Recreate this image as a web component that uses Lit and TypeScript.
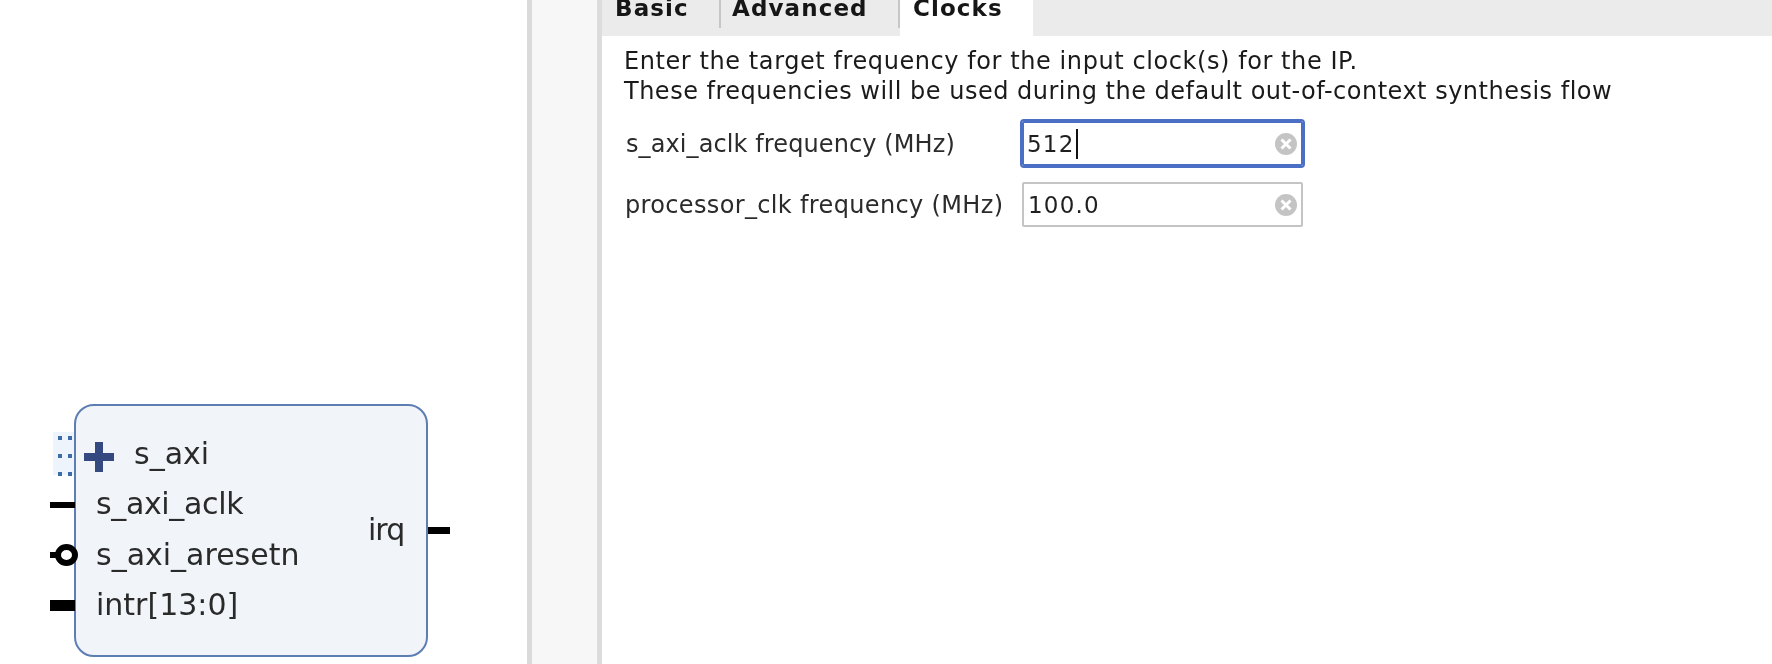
import { LitElement, html, css } from "lit";
import { customElement } from "lit/decorators.js";

const clearIcon = html`<svg class="clear" viewBox="0 0 24 24" width="24" height="24">
  <circle cx="12" cy="12" r="11" fill="#c4c4c4"></circle>
  <path d="M7.5 7.5 L16.5 16.5 M16.5 7.5 L7.5 16.5" stroke="#fff" stroke-width="3" fill="none"></path>
</svg>`;

@customElement("app-root")
export class AppRoot extends LitElement {
  static styles = css`
    :host {
      display: block;
      width: 1772px;
      height: 664px;
      overflow: hidden;
      background: #fff;
      font-family: "DejaVu Sans", sans-serif;
      color: #1c1c1c;
    }
    .page { display: flex; height: 664px; }
    .canvas { position: relative; width: 527px; flex: none; background: #fff; }
    .soft { filter: blur(0.45px); }
    .block {
      position: absolute; left: 74px; top: 404px; width: 350px; height: 249px;
      border: 2px solid #5d7eb3; border-radius: 20px; background: #f1f5fa;
    }
    .label { position: absolute; font-size: 30px; line-height: 32px; white-space: nowrap; color: #2a2a2a; }
    .label.tight { letter-spacing: -0.35px; }
    .label.narrow { letter-spacing: -1px; }
    .wire { position: absolute; background: #000; }
    .grip {
      position: absolute; left: 53px; top: 432px; width: 21px; height: 43px; background: #eef4fb;
    }
    .dot { position: absolute; width: 4px; height: 4px; background: #3c6ba8; }
    .plus { position: absolute; left: 83px; top: 441px; }
    .bubble {
      position: absolute; left: 55px; top: 544px; width: 23px; height: 22px;
      box-sizing: border-box; border: 6px solid #000; border-radius: 50%; background: #fff;
    }
    .side {
      box-sizing: border-box; width: 75px; flex: none; background: #f7f7f7;
      border-left: 5px solid #dadada; border-right: 5px solid #dcdcdc;
    }
    .main { flex: 1; min-width: 0; display: flex; flex-direction: column; background: #fff; }
    .tabs { height: 36px; flex: none; display: flex; background: #ebebeb; align-items: flex-start; }
    .tab {
      font-weight: 700; font-size: 23px; letter-spacing: 1.1px; line-height: 24px;
      box-sizing: border-box; color: #161616; height: 28px;
    }
    .tab span { display: block; margin-top: -4px; }
    .tab.basic { width: 119px; padding-left: 13px; border-right: 2px solid #c6c6c6; }
    .tab.adv { width: 179px; padding-left: 11px; border-right: 2px solid #c6c6c6; }
    .tab.clocks { width: 133px; background: #fff; height: 36px; padding-left: 13px; }
    .content { padding: 10px 0 0 22px; }
    .intro { font-size: 24px; line-height: 30px; letter-spacing: 0.5px; white-space: nowrap; color: #1a1a1a; }
    .intro .first { letter-spacing: 0.58px; }
    .rows { display: grid; grid-template-columns: 396px 281px; row-gap: 16px; margin-top: 15px; align-items: center; margin-left: 2px; }
    .name { font-size: 24px; white-space: nowrap; color: #2b2b2b; letter-spacing: 0.1px; }
    .name.wide { letter-spacing: 0.35px; margin-left: -1px; }
    .field {
      box-sizing: border-box; height: 45px; width: 281px; display: flex; align-items: center;
      justify-content: space-between; border: 2px solid #c4c4c4; background: #fff;
      padding: 0 3px 0 4px; border-radius: 2px; font-size: 23px; letter-spacing: 1.2px; color: #1f1f1f;
    }
    .field.focus { border-color: #4b6fc4; outline: 2px solid #4b6fc4; padding-left: 3px; }
    .val { display: flex; align-items: center; }
    .caret { width: 2px; height: 30px; background: #111; margin-left: 1px; }
    .clear { flex: none; }
  `;

  render() {
    const dots: [number, number][] = [];
    for (const y of [436, 454, 472]) for (const x of [58, 68]) dots.push([x, y]);
    return html`<div class="page">
      <div class="canvas soft">
        <div class="grip"></div>
        ${dots.map(([x, y]) => html`<div class="dot" style="left:${x}px;top:${y}px"></div>`)}
        <div class="block"></div>
        <svg class="plus" width="32" height="32" viewBox="0 0 32 32">
          <path d="M12 1h8v11h11v8H20v11h-8V20H1v-8h11z" fill="#34497f"></path>
        </svg>
        <span class="label" style="left:134px;top:438px">s_axi</span>
        <div class="wire" style="left:50px;top:502px;width:25px;height:6px"></div>
        <span class="label tight" style="left:96px;top:488px">s_axi_aclk</span>
        <div class="wire" style="left:50px;top:552px;width:12px;height:6px"></div>
        <div class="bubble"></div>
        <span class="label" style="left:96px;top:539px">s_axi_aresetn</span>
        <div class="wire" style="left:50px;top:600px;width:25px;height:11px"></div>
        <span class="label" style="left:96px;top:589px">intr[13:0]</span>
        <span class="label narrow" style="left:368px;top:514px">irq</span>
        <div class="wire" style="left:428px;top:527px;width:22px;height:7px"></div>
      </div>
      <div class="side"></div>
      <div class="main soft">
        <div class="tabs">
          <div class="tab basic"><span>Basic</span></div>
          <div class="tab adv"><span>Advanced</span></div>
          <div class="tab clocks"><span>Clocks</span></div>
        </div>
        <div class="content">
          <div class="intro">
            <div class="first">Enter the target frequency for the input clock(s) for the IP.</div>
            <div>These frequencies will be used during the default out-of-context synthesis flow</div>
          </div>
          <div class="rows">
            <div class="name">s_axi_aclk frequency (MHz)</div>
            <div class="field focus"><span class="val">512<span class="caret"></span></span>${clearIcon}</div>
            <div class="name wide">processor_clk frequency (MHz)</div>
            <div class="field"><span class="val">100.0</span>${clearIcon}</div>
          </div>
        </div>
      </div>
    </div>`;
  }
}
